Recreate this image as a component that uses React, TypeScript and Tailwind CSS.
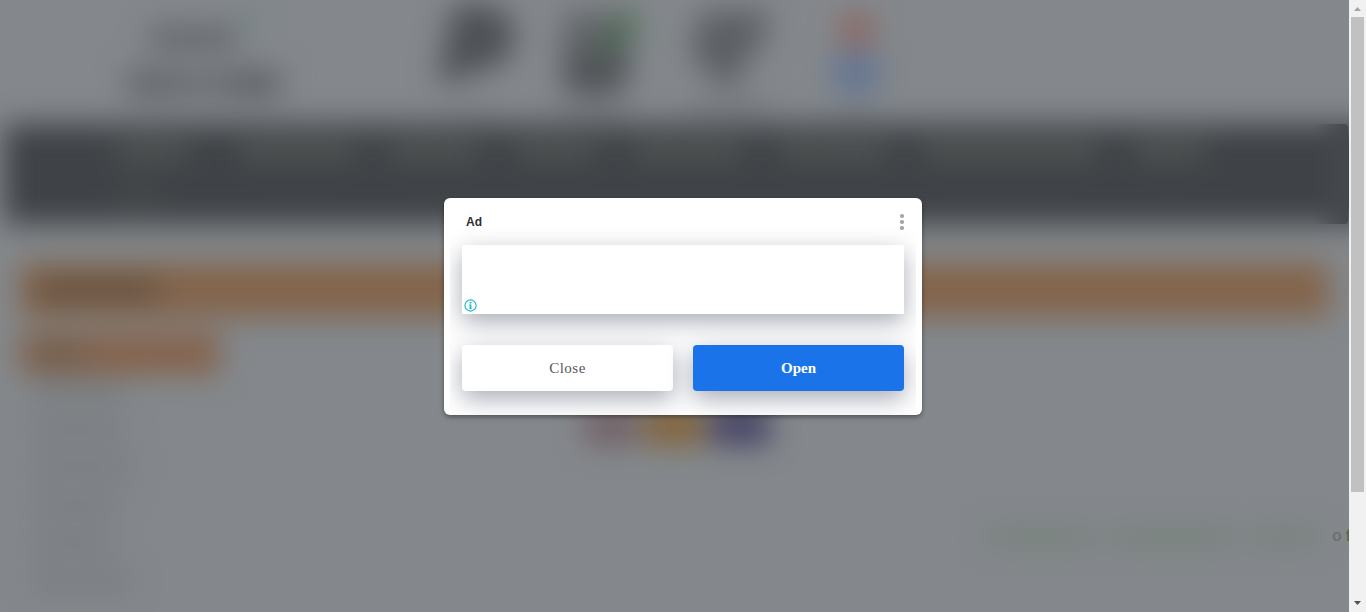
import React from "react";

const navItems = [
  "ml-[112px] w-[74px]",
  "ml-[48px] w-[118px]",
  "ml-[32px] w-[92px]",
  "ml-[34px] w-[84px]",
  "ml-[34px] w-[112px]",
  "ml-[34px] w-[110px]",
  "ml-[34px] w-[176px]",
  "ml-[36px] w-[72px]",
];

const sideLinks = ["w-[92px]", "w-[92px]", "w-[102px]", "w-[86px]", "w-[82px]", "w-[98px]"];

function HeaderLogos() {
  return (
    <svg className="block h-[124px] w-[1349px] shrink-0" viewBox="0 0 1349 124" fill="none">
      <rect x="149" y="27" width="88" height="22" fill="#626569" />
      <rect x="240" y="12" width="20" height="14" fill="#6d8186" />
      <rect x="126" y="70" width="155" height="28" fill="#6b6e72" />
      <rect x="128" y="73" width="45" height="20" fill="#606367" />
      <rect x="232" y="73" width="46" height="20" fill="#5a5d61" />
      <path d="M452 8 Q475 -2 505 12 Q522 30 508 58 Q490 72 466 72 L457 82 L438 82 Z" fill="#4e5155" />
      <path d="M563 12 L632 12 L630 80 Q620 97 595 97 L562 92 Z" fill="#626569" />
      <path d="M563 54 L628 52 L624 88 L572 92 Z" fill="#505357" />
      <path d="M596 42 L632 4 L638 30 L612 52 Z" fill="#4b6b52" />
      <path d="M700 12 L768 10 L764 44 L742 62 L738 90 L715 80 L690 54 Z" fill="#5c5f63" />
      <circle cx="857" cy="30" r="17" fill="#8f625c" />
      <rect x="833" y="52" width="46" height="42" rx="10" fill="#647592" />
      <rect x="455" y="106" width="40" height="6" fill="#75787a" />
      <rect x="560" y="104" width="68" height="7" fill="#6c6f73" />
      <rect x="690" y="102" width="80" height="8" fill="#6c6f73" />
      <rect x="835" y="107" width="40" height="5" fill="#777a7d" />
    </svg>
  );
}

function PageBehind() {
  return (
    <div className="flex h-[612px] w-[1349px] flex-col blur-[15px]">
      <HeaderLogos />
      <div className="ml-[4px] h-[100px] w-[1375px] shrink-0 bg-[#3f4246]">
        <div className="flex pt-[17px]">
          {navItems.map((item, i) => (
            <div key={i} className={`h-[20px] shrink-0 bg-[#515655] ${item}`} />
          ))}
        </div>
        <div className="mt-[29px] ml-[118px] h-[14px] w-[32px] bg-[#4c504f]" />
      </div>
      <div className="mt-[39px] ml-[20px] flex h-[54px] w-[1309px] shrink-0 items-center bg-[#83644a]">
        <div className="ml-[16px] h-[24px] w-[122px] bg-[#665140]" />
      </div>
      <div className="mt-[16px] ml-[20px] flex h-[41px] w-[200px] shrink-0 items-center bg-[#85624a]">
        <div className="ml-[14px] h-[22px] w-[50px] bg-[#6f5c4b]" />
      </div>
      <div className="ml-[32px] flex flex-col gap-[24px] pt-[10px]">
        {sideLinks.map((w, i) => (
          <div key={i} className={`h-[14px] bg-[#74777b] ${w}`} />
        ))}
      </div>
    </div>
  );
}

function AdDialog() {
  return (
    <div className="absolute top-[198px] left-[444px] h-[217px] w-[478px] rounded-[6px] bg-white px-[6px] shadow-[0_2px_5px_rgba(0,0,0,0.4)]">
      <div className="flex h-full flex-col overflow-hidden px-[12px]">
        <div className="flex h-[47px] shrink-0 items-center justify-between pl-[4px]">
          <span className="font-['Liberation_Sans',sans-serif] text-[12px] leading-[16px] font-bold text-[#2d2d30]">Ad</span>
          <svg className="-mr-px mt-px h-[18px] w-[6px]" viewBox="0 0 6 18" fill="#a3a3a6">
            <circle cx="3" cy="3" r="2.1" />
            <circle cx="3" cy="9" r="2.1" />
            <circle cx="3" cy="15" r="2.1" />
          </svg>
        </div>
        <div className="flex h-[69px] shrink-0 items-end bg-white pb-[2px] pl-[2px] shadow-[0_8px_24px_rgba(40,48,75,0.4)]">
          <svg className="h-[13px] w-[13px]" viewBox="0 0 13 13" fill="none">
            <circle cx="6.5" cy="6.5" r="5.6" stroke="#19b7d1" strokeWidth="1.1" />
            <path d="M6.500 5.500v4.500M6.500 3v1.500" stroke="#19b7d1" strokeWidth="1.8" />
            <path d="M5.200 5.800h1.300M5.200 9.700h2.600" stroke="#19b7d1" strokeWidth="0.6" />
          </svg>
        </div>
        <div className="mt-[31px] flex shrink-0 gap-[20px] font-['Liberation_Serif',serif] text-[15px] tracking-[0.5px]">
          <button className="h-[46px] w-[211px] rounded-[4px] bg-white text-[#55565a] shadow-[0_8px_24px_rgba(40,48,75,0.4)]">
            Close
          </button>
          <button className="h-[46px] w-[211px] rounded-[4px] bg-[#1a73e8] font-bold tracking-[0px] text-white shadow-[0_8px_24px_rgba(40,48,75,0.4)]">
            Open
          </button>
        </div>
      </div>
    </div>
  );
}

function Scrollbar() {
  return (
    <div className="flex h-full w-[17px] shrink-0 flex-col items-center justify-between bg-[#f1f1f1]">
      <div className="flex flex-col items-center">
        <svg className="h-[17px] w-[17px]" viewBox="0 0 17 17">
          <path d="M5 11h7L8.500 7z" fill="#a3a3a3" />
        </svg>
        <div className="h-[475px] w-[13px] bg-[#c1c1c1]" />
      </div>
      <svg className="h-[17px] w-[17px]" viewBox="0 0 17 17">
        <path d="M5 6h7l-3.500 4z" fill="#505050" />
      </svg>
    </div>
  );
}

export default function App() {
  return (
    <div className="flex h-[612px] w-[1366px] overflow-hidden">
      <div className="relative h-full w-[1349px] shrink-0 overflow-hidden bg-[#84888c]">
        <PageBehind />
        <div className="absolute top-[124px] left-[1312px] h-[100px] w-[36px] rounded-r-[4px] bg-linear-to-r from-[#414448]/0 to-[#45484c]" />
        <div className="absolute top-[406px] left-[584px] flex h-[40px] gap-[6px] blur-[14px]">
          <div className="w-[54px] bg-[#73646a]" />
          <div className="w-[60px] bg-[#836640]" />
          <div className="w-[60px] bg-[#4a4868]" />
        </div>
        <div className="absolute top-[529px] left-[986px] flex h-[16px] gap-[14px] blur-[14px]">
          <div className="w-[110px] bg-[#768078]" />
          <div className="w-[128px] bg-[#768078]" />
          <div className="w-[66px] bg-[#768078]" />
        </div>
        <div className="absolute top-[527px] left-[1332px] flex gap-[4px] font-['Liberation_Sans',sans-serif] text-[16px] leading-[18px] font-bold">
          <span className="text-[#6b716d]">o</span>
          <span className="text-[#4d6b50]">f</span>
        </div>
        <AdDialog />
      </div>
      <Scrollbar />
    </div>
  );
}
